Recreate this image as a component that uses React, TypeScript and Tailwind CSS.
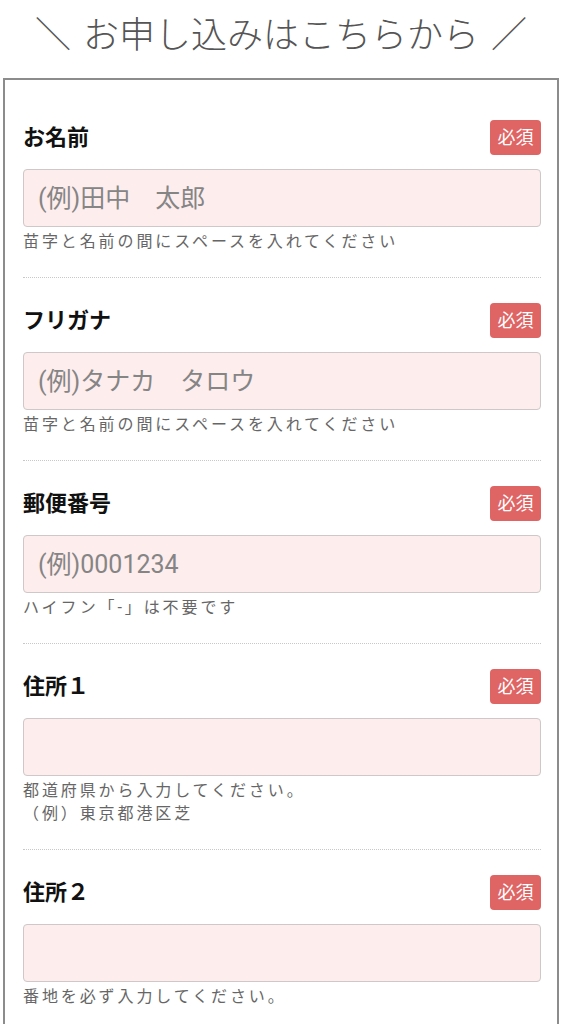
import React from "react";

type Field = {
  label: string;
  placeholder?: string;
  notes: string[];
};

const fields: Field[] = [
  {
    label: "お名前",
    placeholder: "(例)田中　太郎",
    notes: ["苗字と名前の間にスペースを入れてください"],
  },
  {
    label: "フリガナ",
    placeholder: "(例)タナカ　タロウ",
    notes: ["苗字と名前の間にスペースを入れてください"],
  },
  {
    label: "郵便番号",
    placeholder: "(例)0001234",
    notes: ["ハイフン「-」は不要です"],
  },
  {
    label: "住所１",
    notes: ["都道府県から入力してください。", "（例）東京都港区芝"],
  },
  {
    label: "住所２",
    notes: ["番地を必ず入力してください。"],
  },
];

const FormRow = ({ field, first }: { field: Field; first: boolean }) => {
  return (
    <div
      className={
        first
          ? "border-b border-dotted border-[#c8c8c8] pt-[40px] pb-[24px]"
          : "border-b border-dotted border-[#c8c8c8] pt-[25px] pb-[24px]"
      }
    >
      <div className="flex h-[35px] items-center justify-between">
        <label className="text-[22px] font-bold leading-none text-[#111]">
          {field.label}
        </label>
        <span className="flex h-[35px] w-[51px] items-center justify-center rounded-[4px] bg-[#df6464] text-[18px] leading-none text-white">
          必須
        </span>
      </div>
      <input
        type="text"
        placeholder={field.placeholder}
        className="mt-[14px] block h-[58px] w-full rounded-[4px] border border-[#cfc8c8] bg-[#fdeded] px-[14px] text-[25px] text-[#333] outline-none placeholder:text-[#858585]"
      />
      <div className="mt-[3px]">
        {field.notes.map((note) => (
          <p
            key={note}
            className="text-[16px] leading-[23px] tracking-[2.9px] text-[#666]"
          >
            {note}
          </p>
        ))}
      </div>
    </div>
  );
};

export default function App() {
  return (
    <div
      className="min-h-screen bg-white"
      style={{ fontFamily: 'Roboto, "Noto Sans CJK JP", sans-serif' }}
    >
      <div className="ml-[3px] w-[556px]">
        <h2 className="flex h-[70px] items-center justify-center gap-[12px] pt-[2px] text-[36px] font-light leading-none text-[#555]">
          <span>＼</span>
          <span>お申し込みはこちらから</span>
          <span>／</span>
        </h2>
        <div className="mt-[8px] border-2 border-[#8c8c8c] pl-[18px] pr-[16px]">
          {fields.map((f, i) => (
            <FormRow key={f.label} field={f} first={i === 0} />
          ))}
        </div>
      </div>
    </div>
  );
}
